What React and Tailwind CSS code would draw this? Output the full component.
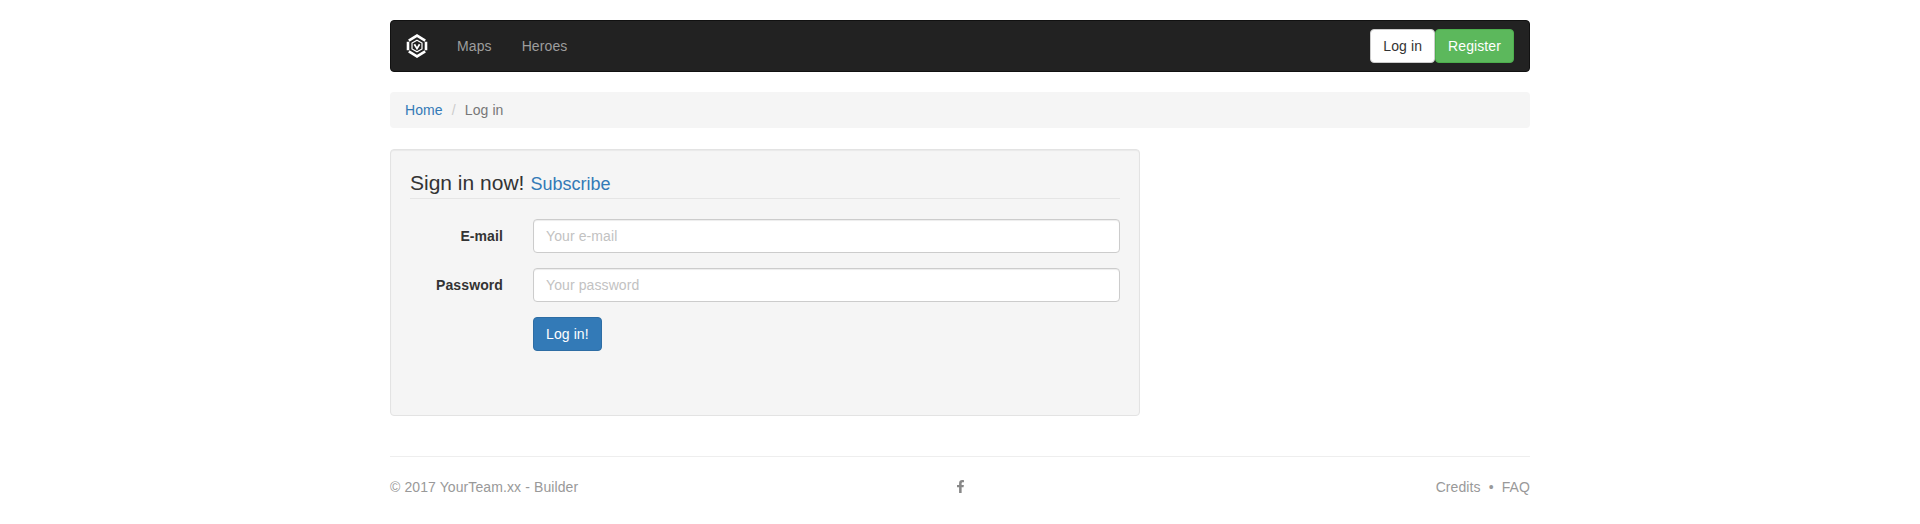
import { FaFacebookF } from "react-icons/fa"

function Logo() {
  return (
    <svg width="24" height="24" viewBox="0 0 24 24" fill="none" stroke="#fff">
      <path d="M3.8 6.6 12 1.6 20.2 6.6" strokeWidth="2.6" />
      <path d="M3.8 17.4 12 22.4 20.2 17.4" strokeWidth="2.6" />
      <path d="M3 7.8V16.2M21 7.8V16.2" strokeWidth="2.6" />
      <path d="M12 6.2 17 9.1V14.9L12 17.8 7 14.9V9.1Z" strokeWidth="1.2" />
      <path d="M9.4 10.2 12 14.6 14.6 10.2" strokeWidth="1.8" />
    </svg>
  )
}

function Field({ label, placeholder, type }) {
  return (
    <div className="flex items-center mb-[15px]">
      <label className="w-[93px] text-right font-bold text-[14px] text-[#333]">{label}</label>
      <input
        type={type}
        placeholder={placeholder}
        className="ml-[30px] h-[34px] w-[587px] rounded border border-[#ccc] bg-white px-3 text-[14px] tracking-[0.1px] text-[#555] shadow-[inset_0_1px_1px_rgba(0,0,0,0.075)] outline-none placeholder:text-[#c2c2c2]"
      />
    </div>
  )
}

export default function App() {
  return (
    <div className="bg-white min-h-[524px] font-['Liberation_Sans',Arial,sans-serif] text-[14px] leading-[20px] tracking-[0.1px] text-[#333]">
      <div className="w-[1140px] mx-auto pt-5">
        {/* navbar */}
        <nav className="h-[52px] rounded bg-[#222] border border-[#111] flex items-center justify-between pl-[14px] pr-[15px]">
          <div className="flex items-center">
            <Logo />
            <a className="ml-[13px] px-[15px] text-[#9d9d9d]">Maps</a>
            <a className="px-[15px] text-[#9d9d9d]">Heroes</a>
          </div>
          <div className="flex">
            <button className="h-[34px] px-3 rounded bg-white border border-[#ccc] text-[#333]">Log in</button>
            <button className="h-[34px] px-3 rounded bg-[#5cb85c] border border-[#4cae4c] text-white">Register</button>
          </div>
        </nav>

        {/* breadcrumb */}
        <div className="mt-5 h-9 rounded bg-[#f5f5f5] px-[15px] flex items-center">
          <a className="text-[#337ab7]">Home</a>
          <span className="px-[9px] text-[#ccc]">/</span>
          <span className="text-[#777]">Log in</span>
        </div>

        {/* form well */}
        <div className="mt-[21px] w-[750px] h-[267px] rounded border border-[#e3e3e3] bg-[#f5f5f5] p-[19px] shadow-[inset_0_1px_1px_rgba(0,0,0,0.05)]">
          <div className="h-[30px] border-b border-[#e5e5e5] flex items-baseline mb-5 leading-[28px] tracking-normal">
            <span className="text-[21px]">Sign in now!</span>
            <a className="ml-[6px] text-[18px] text-[#337ab7]">Subscribe</a>
          </div>
          <form>
            <Field label="E-mail" placeholder="Your e-mail" type="email" />
            <Field label="Password" placeholder="Your password" type="password" />
            <button type="button" className="ml-[123px] h-[34px] px-3 rounded bg-[#337ab7] border border-[#2e6da4] text-white">Log in!</button>
          </form>
        </div>

        {/* footer */}
        <div className="mt-10 border-t border-[#eee] pt-5 flex items-center justify-between text-[#999]">
          <span className="w-[400px]">© 2017 YourTeam.xx - Builder</span>
          <FaFacebookF size={13} className="text-[#888] mb-[2px]" />
          <span className="w-[400px] text-right">
            Credits<span className="mx-[8px]">•</span>FAQ
          </span>
        </div>
      </div>
    </div>
  )
}
